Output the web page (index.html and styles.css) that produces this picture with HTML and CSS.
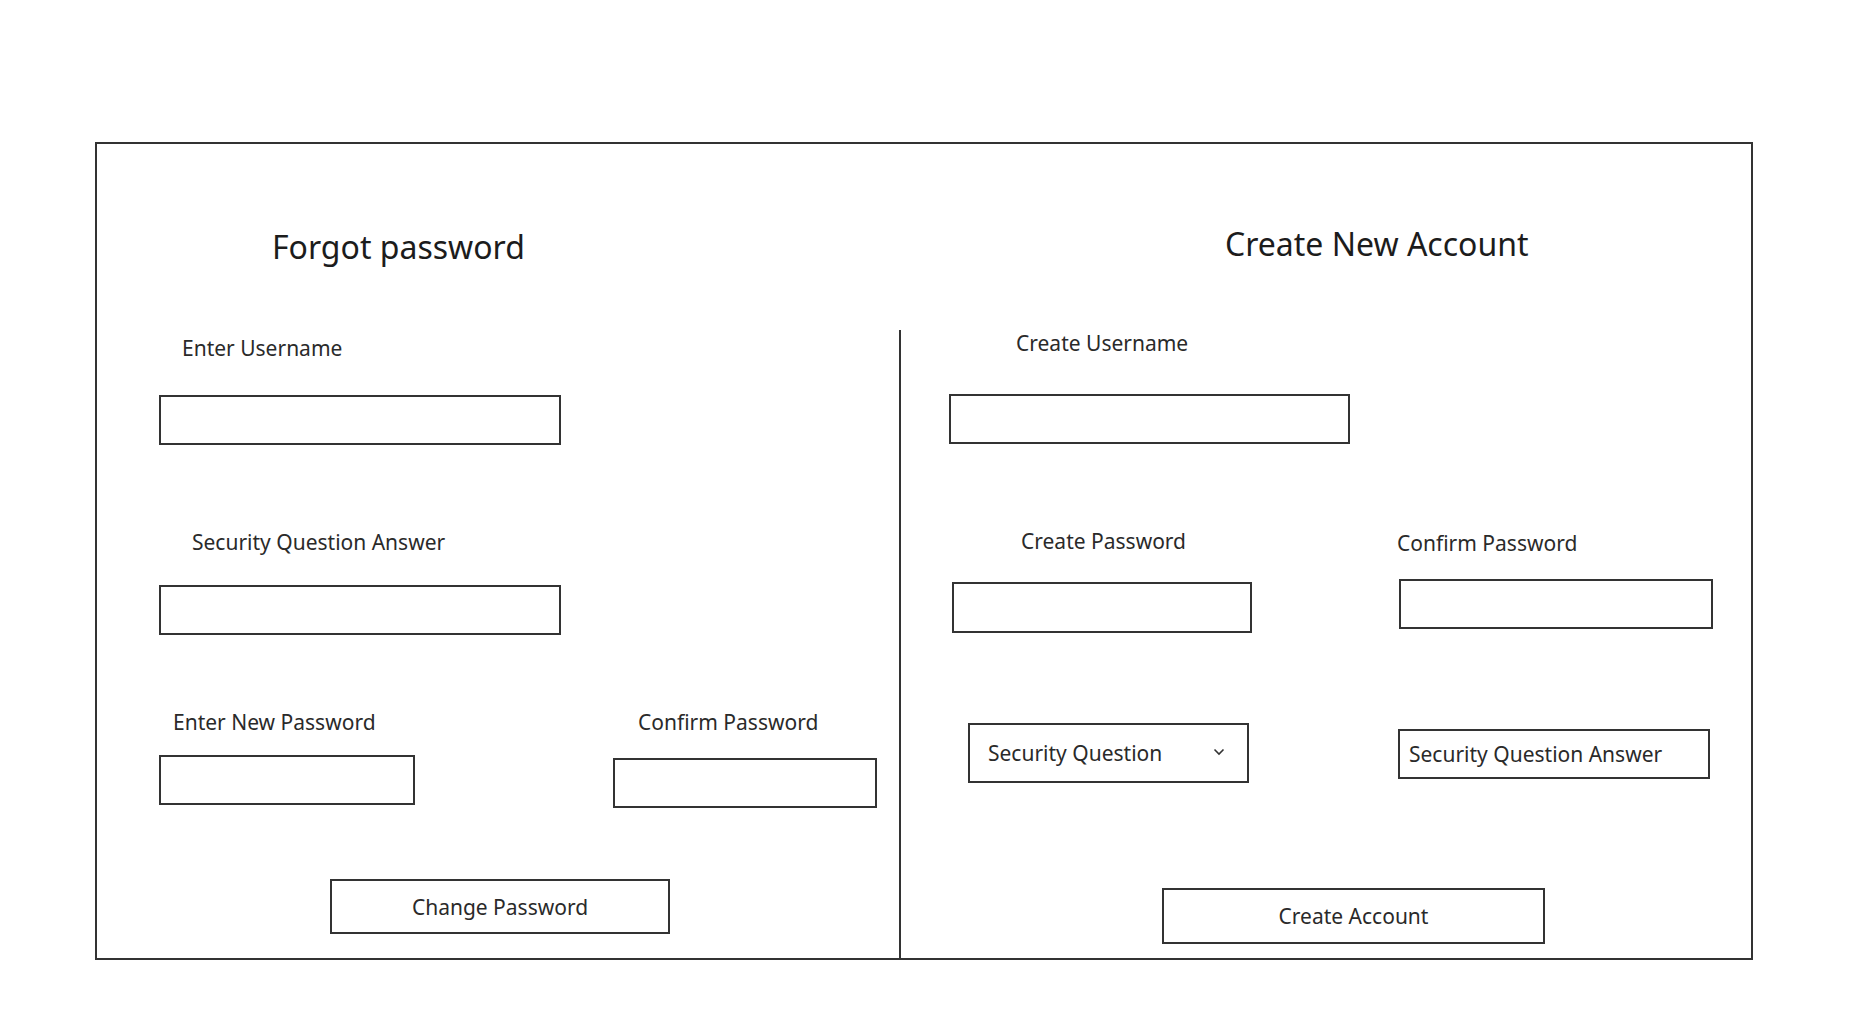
FILE: index.html
```html
<!DOCTYPE html>
<html lang="en">
<head>
<meta charset="utf-8">
<title>Forgot password / Create New Account</title>
<link rel="stylesheet" href="styles.css">
</head>
<body>
<div class="frame">
  <div class="head head-left"><h1 class="title">Forgot password</h1></div>
  <div class="head head-right"><h1 class="title">Create New Account</h1></div>

  <section class="panel panel-left">
    <div class="label l-user">Enter Username</div>
    <div class="box b-user"></div>

    <div class="label l-sqa">Security Question Answer</div>
    <div class="box b-sqa"></div>

    <div class="pair pair-left labels-np">
      <div class="label l-np">Enter New Password</div>
      <div class="label l-cp">Confirm Password</div>
    </div>
    <div class="pair pair-left inputs-np">
      <div class="box b-np"></div>
      <div class="box b-cp"></div>
    </div>

    <div class="button btn-change">Change Password</div>
  </section>

  <section class="panel panel-right">
    <div class="label l-cu">Create Username</div>
    <div class="box b-cu"></div>

    <div class="pair pair-right labels-pw">
      <div class="label l-cpw">Create Password</div>
      <div class="label l-cfm">Confirm Password</div>
    </div>
    <div class="pair pair-right inputs-pw">
      <div class="box b-cpw"></div>
      <div class="box b-cfm"></div>
    </div>

    <div class="pair pair-right sec-row">
      <div class="box select">
        <span>Security Question</span>
        <svg class="chev" width="12" height="8" viewBox="0 0 12 8"><path d="M1.5 1.5 L6 6 L10.5 1.5" fill="none" stroke="#333" stroke-width="1.6"/></svg>
      </div>
      <div class="box answer"><span>Security Question Answer</span></div>
    </div>

    <div class="button btn-create">Create Account</div>
  </section>
</div>
</body>
</html>
```

FILE: styles.css
```css
* { box-sizing: border-box; }

html, body {
  margin: 0;
  padding: 0;
  background: #ffffff;
}

body {
  font-family: "Noto Sans", "Open Sans", sans-serif;
  color: #222;
}

.frame {
  margin: 142px 0 0 95px;
  width: 1658px;
  height: 818px;
  border: 2px solid #333;
  display: grid;
  grid-template-columns: 802px 1fr;
  grid-template-rows: 186px 1fr;
}

.title {
  margin: 0;
  font-weight: 400;
  font-size: 32px;
  line-height: 40px;
  color: #1c1c1c;
  letter-spacing: 0;
}

.head-left .title { margin: 83px 0 0 175px; }
.head-right .title { margin: 80px 0 0 326px; }

.panel {
  display: flex;
  flex-direction: column;
  align-items: flex-start;
}

.panel-right {
  border-left: 2px solid #333;
}

.label {
  font-size: 21px;
  line-height: 26px;
  letter-spacing: 0;
  color: #2a2a2a;
  white-space: nowrap;
}

.box {
  border: 2px solid #333;
  height: 50px;
  background: #fff;
}

/* left panel */
.l-user { margin: 5px 0 0 85px; }
.b-user { margin: 34px 0 0 62px; width: 402px; }
.l-sqa { margin: 84px 0 0 95px; }
.b-sqa { margin: 30px 0 0 62px; width: 402px; }

.pair {
  display: grid;
  align-items: start;
  width: 100%;
}
.pair-left { grid-template-columns: 516px 1fr; }
.pair-right { grid-template-columns: 496px 1fr; }

.labels-np { margin-top: 74px; }
.l-np { padding-left: 76px; }
.l-cp { padding-left: 25px; }

.inputs-np { margin-top: 20px; }
.b-np { margin-left: 62px; width: 256px; }
.b-cp { margin-top: 3px; width: 264px; }

.button {
  border: 2px solid #333;
  height: 55px;
  display: flex;
  align-items: center;
  justify-content: center;
  font-size: 21px;
  color: #2a2a2a;
}

.btn-change { margin: 71px 0 0 233px; width: 340px; }

/* right panel */
.l-cu { margin: 0 0 0 115px; }
.b-cu { margin: 38px 0 0 48px; width: 401px; }

.labels-pw { margin-top: 84px; }
.l-cpw { padding-left: 120px; }
.l-cfm { padding-left: 0; margin-top: 2px; }

.inputs-pw { margin-top: 23px; }
.b-cpw { margin: 3px 0 0 51px; width: 300px; height: 51px; }
.b-cfm { margin-left: 2px; width: 314px; }

.sec-row { margin-top: 90px; }

.select {
  margin-left: 67px;
  width: 281px;
  height: 60px;
  display: flex;
  align-items: center;
  justify-content: space-between;
  padding: 0 22px 0 18px;
}

.select span, .answer span {
  font-size: 21px;
  color: #2a2a2a;
  white-space: nowrap;
}

.chev { display: block; margin-top: -2px; }

.answer {
  margin: 6px 0 0 1px;
  width: 312px;
  display: flex;
  align-items: center;
  padding-left: 9px;
}

.btn-create { margin: 105px 0 0 261px; width: 383px; height: 56px; }
```
